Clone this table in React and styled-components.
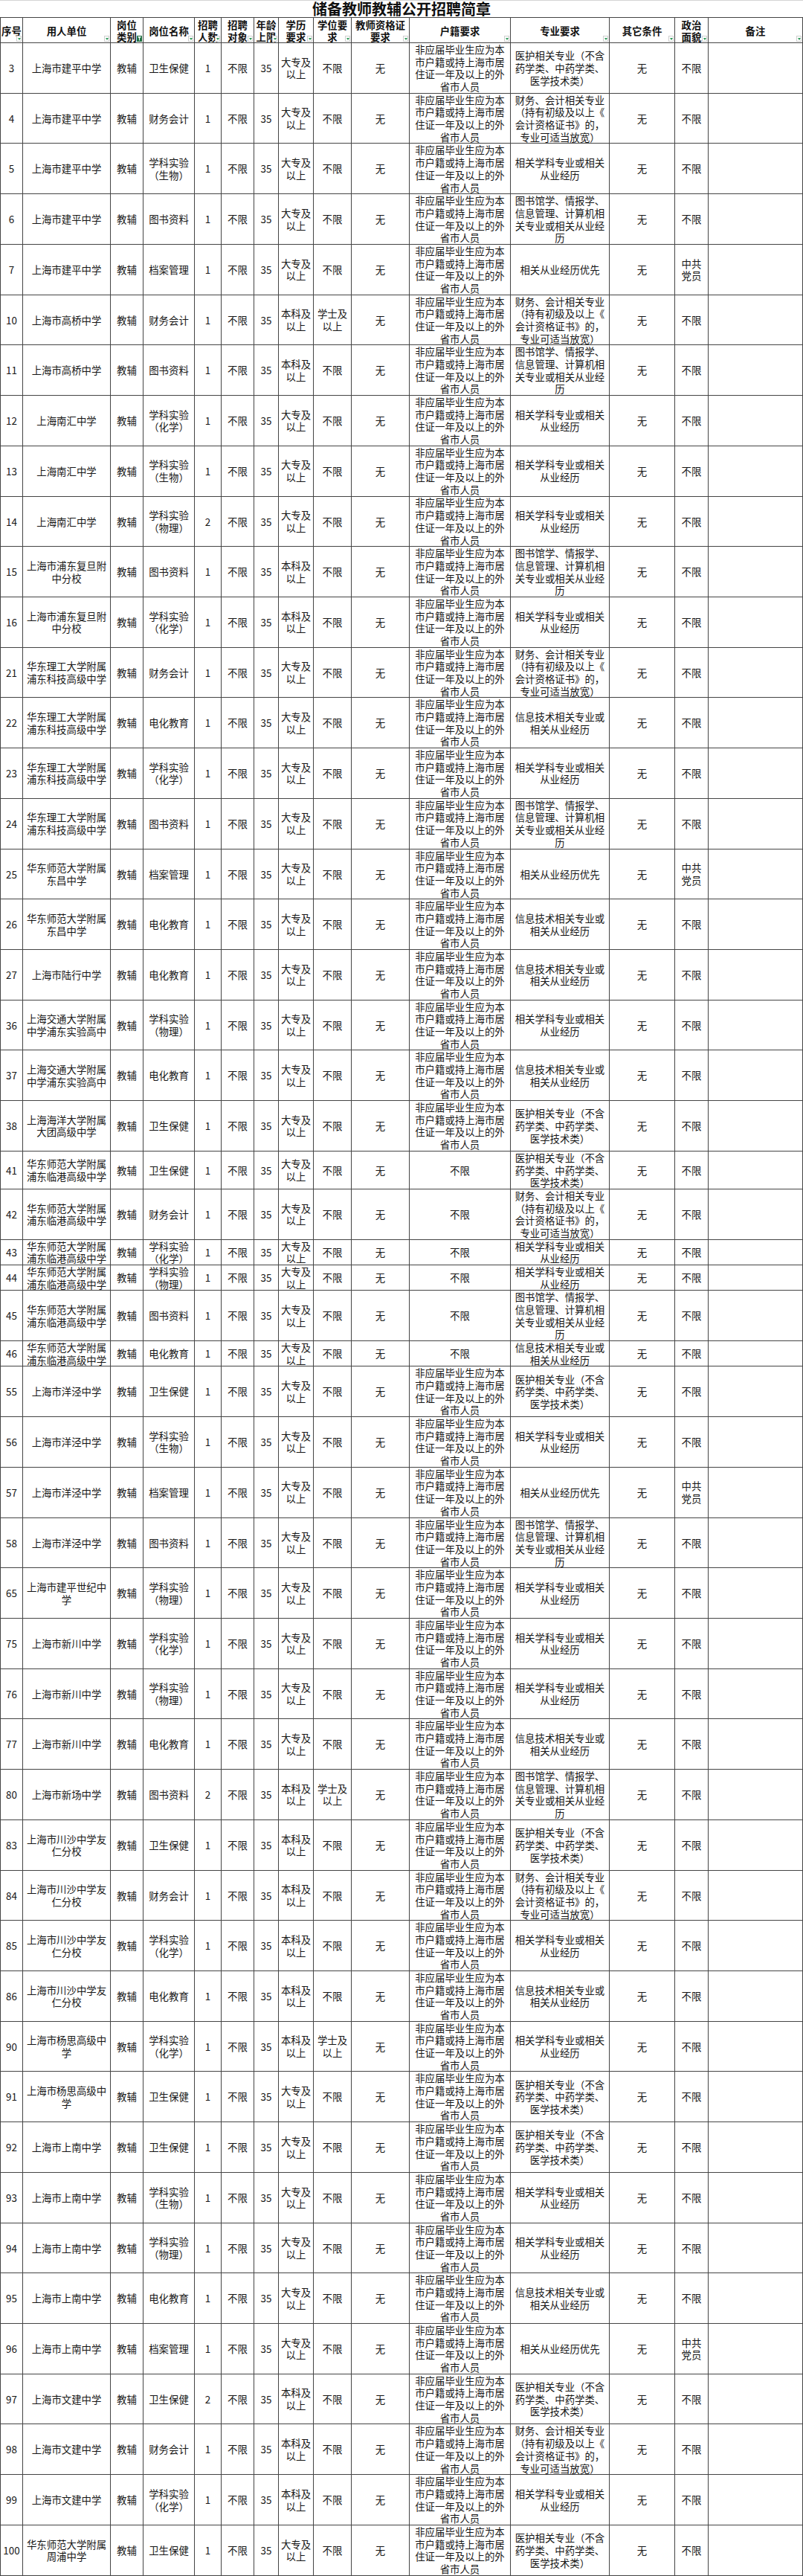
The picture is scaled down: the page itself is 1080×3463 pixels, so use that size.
import React from 'react';
import styled, { createGlobalStyle } from 'styled-components';

const Global = createGlobalStyle`
  html, body { margin: 0; padding: 0; background: #fff; }
  body { font-family: "Noto Sans CJK SC", "Noto Sans", sans-serif; color: #151515; }
`;

const LINE = 16.68;
const widths = [30, 118, 44, 69, 36, 44, 33, 47, 51, 78, 136, 133, 88, 45, 127];
const template = widths.map(w => `${w}px`).join(' ');

const Page = styled.div`
  width: 1080px;
  background: #fff;
`;

const Title = styled.h1`
  margin: 0;
  height: 23px;
  box-sizing: border-box;
  border-top: 1px solid #d4d4d4;
  line-height: 21px;
  font-size: 20px;
  font-weight: 700;
  text-align: center;
  color: #111;
  font-family: "Noto Sans CJK SC", sans-serif;
`;

const Sheet = styled.div`
  width: 1080px;
  box-sizing: border-box;
  border-top: 1px solid #454545;
  border-left: 1px solid #454545;
  font-size: 13.4px;
  line-height: ${LINE}px;
`;

const Row = styled.div`
  display: grid;
  grid-template-columns: ${template};
  height: ${p => p.$h}px;
`;

const Cell = styled.div`
  position: relative;
  box-sizing: border-box;
  min-width: 0;
  border-right: 1px solid #454545;
  border-bottom: 1px solid #454545;
  display: flex;
  align-items: center;
  justify-content: center;
  text-align: center;
  white-space: nowrap;
  font-weight: ${p => (p.$head ? 700 : 400)};
  line-height: ${p => (p.$head ? '16px' : `${LINE}px`)};
  color: ${p => (p.$head ? '#111' : '#161616')};
`;

const Text = styled.span`
  display: block;
`;

const FilterBtn = styled.span`
  position: absolute;
  right: 1px;
  bottom: 1px;
  width: 7px;
  height: 8px;
  box-sizing: border-box;
  border: 1px solid ${p => (p.$active ? '#1e6b3c' : '#cfcfcf')};
  background: ${p => (p.$active ? '#217346' : '#fff')};
  display: flex;
  align-items: center;
  justify-content: center;
  &::after {
    content: '';
    display: ${p => (p.$active ? 'none' : 'block')};
    width: 0;
    height: 0;
    border-left: 2px solid transparent;
    border-right: 2px solid transparent;
    border-top: 3px solid #2f9a5a;
  }
`;

const Funnel = () => (
  <svg width="5" height="6" viewBox="0 0 5 6">
    <path d="M0 0H5L3 2.5V6L2 5V2.5Z" fill="#fff" />
  </svg>
);

const asArr = v => (Array.isArray(v) ? v : [v]);

const Lines = ({ v }) => (
  <Text>
    {asArr(v).map((l, i) => (
      <React.Fragment key={i}>
        {i > 0 && <br />}
        {l}
      </React.Fragment>
    ))}
  </Text>
);

const headers = [
  ['序号'],
  ['用人单位'],
  ['岗位', '类别'],
  ['岗位名称'],
  ['招聘', '人数'],
  ['招聘', '对象'],
  ['年龄', '上限'],
  ['学历', '要求'],
  ['学位要', '求'],
  ['教师资格证', '要求'],
  ['户籍要求'],
  ['专业要求'],
  ['其它条件'],
  ['政治', '面貌'],
  ['备注'],
];

const H = ['非应届毕业生应为本', '市户籍或持上海市居', '住证一年及以上的外', '省市人员'];
const YIHU = ['医护相关专业（不含', '药学类、中药学类、', '医学技术类）'];
const CAIWU = ['财务、会计相关专业', '（持有初级及以上《', '会计资格证书》的，', '专业可适当放宽）'];
const XUEKE = ['相关学科专业或相关', '从业经历'];
const TUSHU = ['图书馆学、情报学、', '信息管理、计算机相', '关专业或相关从业经', '历'];
const DANGAN = ['相关从业经历优先'];
const XINXI = ['信息技术相关专业或', '相关从业经历'];

const DZ = ['大专及', '以上'];
const BK = ['本科及', '以上'];
const XS = ['学士及', '以上'];
const DY = ['中共', '党员'];
const NO = '不限';

const JP = ['上海市建平中学'];
const GQ = ['上海市高桥中学'];
const NH = ['上海南汇中学'];
const FD = ['上海市浦东复旦附', '中分校'];
const HL = ['华东理工大学附属', '浦东科技高级中学'];
const DC = ['华东师范大学附属', '东昌中学'];
const LX = ['上海市陆行中学'];
const JD = ['上海交通大学附属', '中学浦东实验高中'];
const HY = ['上海海洋大学附属', '大团高级中学'];
const LG = ['华东师范大学附属', '浦东临港高级中学'];
const YJ = ['上海市洋泾中学'];
const SJ = ['上海市建平世纪中', '学'];
const XC = ['上海市新川中学'];
const XCH = ['上海市新场中学'];
const CS = ['上海市川沙中学友', '仁分校'];
const YS = ['上海市杨思高级中', '学'];
const SN = ['上海市上南中学'];
const WJ = ['上海市文建中学'];
const ZP = ['华东师范大学附属', '周浦中学'];

const WS = '卫生保健';
const CW = '财务会计';
const TS = '图书资料';
const DA = '档案管理';
const DH = '电化教育';
const SW = ['学科实验', '（生物）'];
const HX = ['学科实验', '（化学）'];
const WL = ['学科实验', '（物理）'];

// [no, unit, post, count, edu, degree, huji, major, politics]
const rows = [
  [3, JP, WS, 1, DZ, NO, H, YIHU, NO],
  [4, JP, CW, 1, DZ, NO, H, CAIWU, NO],
  [5, JP, SW, 1, DZ, NO, H, XUEKE, NO],
  [6, JP, TS, 1, DZ, NO, H, TUSHU, NO],
  [7, JP, DA, 1, DZ, NO, H, DANGAN, DY],
  [10, GQ, CW, 1, BK, XS, H, CAIWU, NO],
  [11, GQ, TS, 1, BK, NO, H, TUSHU, NO],
  [12, NH, HX, 1, DZ, NO, H, XUEKE, NO],
  [13, NH, SW, 1, DZ, NO, H, XUEKE, NO],
  [14, NH, WL, 2, DZ, NO, H, XUEKE, NO],
  [15, FD, TS, 1, BK, NO, H, TUSHU, NO],
  [16, FD, HX, 1, BK, NO, H, XUEKE, NO],
  [21, HL, CW, 1, DZ, NO, H, CAIWU, NO],
  [22, HL, DH, 1, DZ, NO, H, XINXI, NO],
  [23, HL, HX, 1, DZ, NO, H, XUEKE, NO],
  [24, HL, TS, 1, DZ, NO, H, TUSHU, NO],
  [25, DC, DA, 1, DZ, NO, H, DANGAN, DY],
  [26, DC, DH, 1, DZ, NO, H, XINXI, NO],
  [27, LX, DH, 1, DZ, NO, H, XINXI, NO],
  [36, JD, WL, 1, DZ, NO, H, XUEKE, NO],
  [37, JD, DH, 1, DZ, NO, H, XINXI, NO],
  [38, HY, WS, 1, DZ, NO, H, YIHU, NO],
  [41, LG, WS, 1, DZ, NO, NO, YIHU, NO],
  [42, LG, CW, 1, DZ, NO, NO, CAIWU, NO],
  [43, LG, HX, 1, DZ, NO, NO, XUEKE, NO],
  [44, LG, WL, 1, DZ, NO, NO, XUEKE, NO],
  [45, LG, TS, 1, DZ, NO, NO, TUSHU, NO],
  [46, LG, DH, 1, DZ, NO, NO, XINXI, NO],
  [55, YJ, WS, 1, DZ, NO, H, YIHU, NO],
  [56, YJ, SW, 1, DZ, NO, H, XUEKE, NO],
  [57, YJ, DA, 1, DZ, NO, H, DANGAN, DY],
  [58, YJ, TS, 1, DZ, NO, H, TUSHU, NO],
  [65, SJ, WL, 1, DZ, NO, H, XUEKE, NO],
  [75, XC, HX, 1, DZ, NO, H, XUEKE, NO],
  [76, XC, WL, 1, DZ, NO, H, XUEKE, NO],
  [77, XC, DH, 1, DZ, NO, H, XINXI, NO],
  [80, XCH, TS, 2, BK, XS, H, TUSHU, NO],
  [83, CS, WS, 1, BK, NO, H, YIHU, NO],
  [84, CS, CW, 1, BK, NO, H, CAIWU, NO],
  [85, CS, HX, 1, BK, NO, H, XUEKE, NO],
  [86, CS, DH, 1, BK, NO, H, XINXI, NO],
  [90, YS, HX, 1, BK, XS, H, XUEKE, NO],
  [91, YS, WS, 1, DZ, NO, H, YIHU, NO],
  [92, SN, WS, 1, DZ, NO, H, YIHU, NO],
  [93, SN, SW, 1, DZ, NO, H, XUEKE, NO],
  [94, SN, WL, 1, DZ, NO, H, XUEKE, NO],
  [95, SN, DH, 1, DZ, NO, H, XINXI, NO],
  [96, SN, DA, 1, DZ, NO, H, DANGAN, DY],
  [97, WJ, WS, 2, BK, NO, H, YIHU, NO],
  [98, WJ, CW, 1, BK, NO, H, CAIWU, NO],
  [99, WJ, HX, 1, BK, NO, H, XUEKE, NO],
  [100, ZP, WS, 1, DZ, NO, H, YIHU, NO],
];

export default function App() {
  return (
    <Page>
      <Global />
      <Title>储备教师教辅公开招聘简章</Title>
      <Sheet>
        <Row $h={34}>
          {headers.map((h, i) => (
            <Cell key={i} $head>
              <Lines v={h} />
              <FilterBtn $active={i === 2}>{i === 2 && <Funnel />}</FilterBtn>
            </Cell>
          ))}
        </Row>
        {rows.map(r => {
          const [no, unit, post, count, edu, deg, huji, major, pol] = r;
          const lines = Math.max(...[unit, post, edu, deg, huji, major, pol].map(v => asArr(v).length));
          return (
            <Row key={no} $h={lines * LINE + 1}>
              <Cell>{no}</Cell>
              <Cell><Lines v={unit} /></Cell>
              <Cell>教辅</Cell>
              <Cell><Lines v={post} /></Cell>
              <Cell>{count}</Cell>
              <Cell>不限</Cell>
              <Cell>35</Cell>
              <Cell><Lines v={edu} /></Cell>
              <Cell><Lines v={deg} /></Cell>
              <Cell>无</Cell>
              <Cell><Lines v={huji} /></Cell>
              <Cell><Lines v={major} /></Cell>
              <Cell>无</Cell>
              <Cell><Lines v={pol} /></Cell>
              <Cell />
            </Row>
          );
        })}
      </Sheet>
    </Page>
  );
}
